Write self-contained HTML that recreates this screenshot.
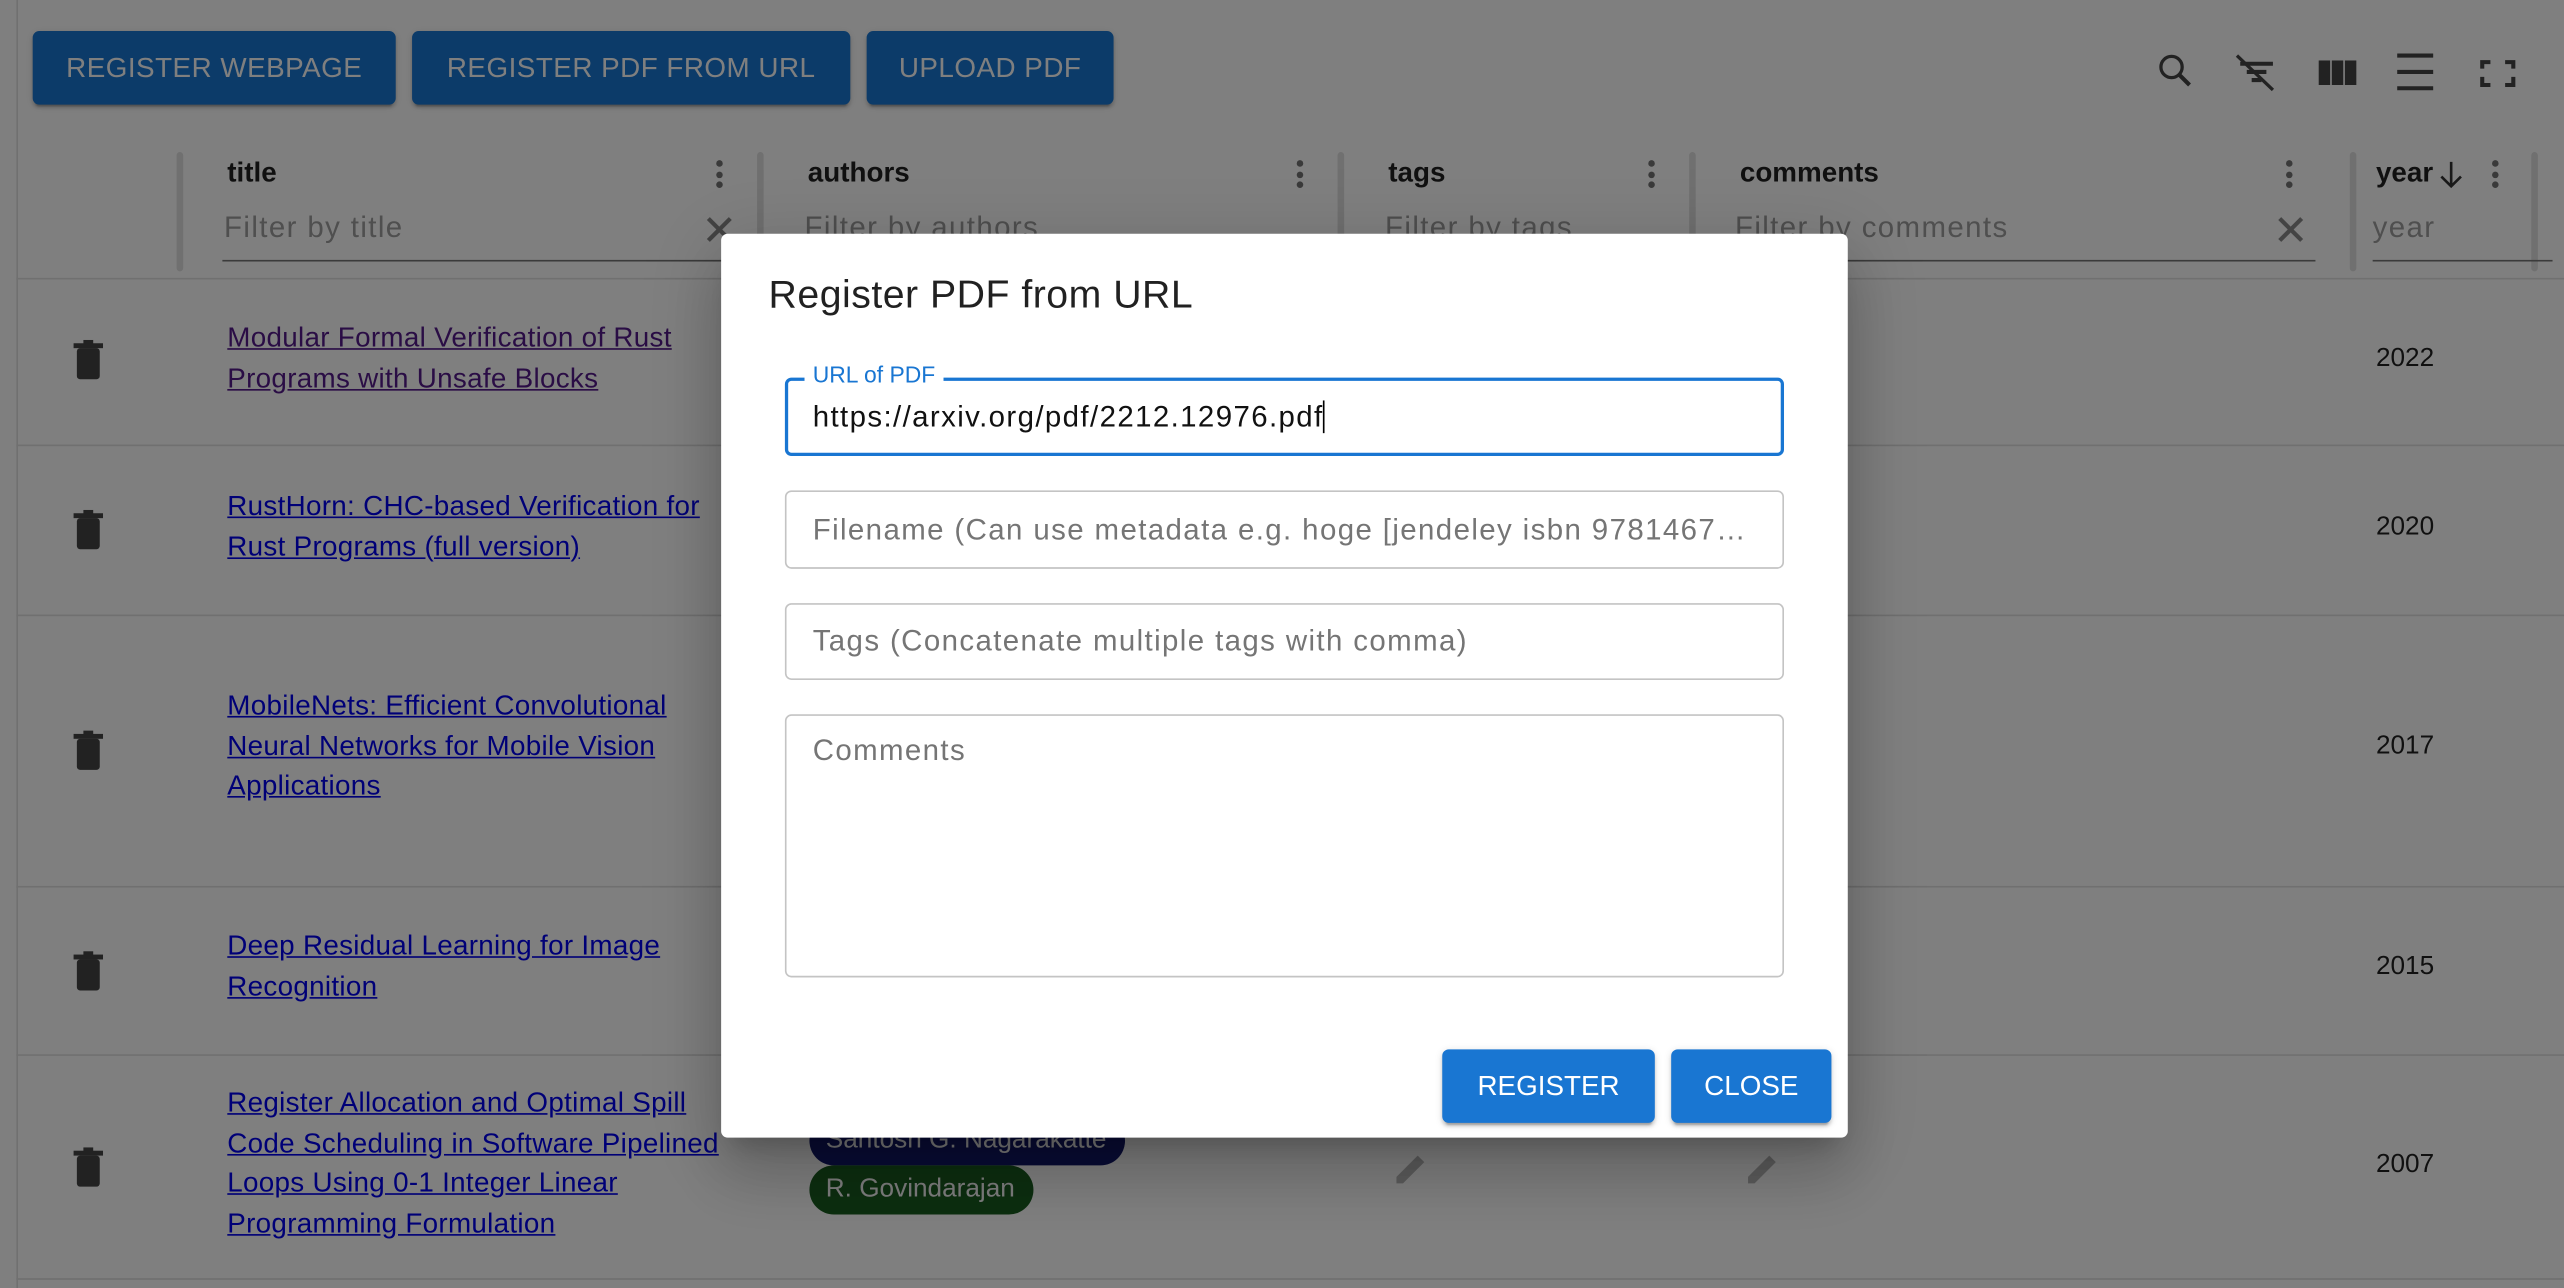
<!DOCTYPE html>
<html><head><meta charset="utf-8"><style>
html,body{margin:0;padding:0;width:2564px;height:1288px;overflow:hidden;background:#fff}
#s{position:absolute;left:0;top:0;width:1568px;height:788px;transform:scale(1.63520,1.63452);transform-origin:0 0;font-family:"Liberation Sans",sans-serif;color:rgba(0,0,0,.87)}
.a{position:absolute}
.btn{position:absolute;top:19px;height:45px;background:#1976d2;color:#fff;border-radius:4px;font-size:17px;letter-spacing:.3px;display:flex;align-items:center;justify-content:center;box-shadow:0 3px 1px -2px rgba(0,0,0,.2),0 2px 2px rgba(0,0,0,.14),0 1px 5px rgba(0,0,0,.12)}
.sep{position:absolute;top:93px;width:4px;height:73px;background:#e0e0e0;border-radius:2px}
.hd{position:absolute;top:96px;font-weight:bold;font-size:17px}
.flt{position:absolute;top:129px;font-size:18px;letter-spacing:.85px;color:#9e9e9e}
.ul{position:absolute;top:159px;height:1px;background:#777}
.row{position:absolute;left:10px;width:1558px;height:1px;background:#e0e0e0}
.lk{position:absolute;left:139px;font-size:17px;letter-spacing:.18px;line-height:24.5px;color:#0000ee;text-decoration:underline}
.yr{position:absolute;left:1453px;font-size:16px}
.dots{position:absolute;top:98px;width:4px}
.dots i{display:block;width:4px;height:4px;border-radius:2px;background:#757575;margin-bottom:2.5px}
#ov{position:absolute;left:0;top:0;width:1568px;height:788px;background:rgba(0,0,0,.5)}
#dlg{position:absolute;left:441px;top:143px;width:689px;height:553px;background:#fff;border-radius:4px;box-shadow:0 11px 15px -7px rgba(0,0,0,.2),0 24px 38px 3px rgba(0,0,0,.14),0 9px 46px 8px rgba(0,0,0,.12)}
.fld{position:absolute;left:39px;width:611px;border:1px solid #c4c4c4;border-radius:4px;font-size:18px;letter-spacing:.85px;color:#757575;box-sizing:border-box;padding-left:16px;white-space:nowrap}
.db{position:absolute;top:499px;height:45px;background:#1976d2;color:#fff;border-radius:4px;font-size:17px;display:flex;align-items:center;justify-content:center;box-shadow:0 3px 1px -2px rgba(0,0,0,.2),0 2px 2px rgba(0,0,0,.14),0 1px 5px rgba(0,0,0,.12)}
.chip{position:absolute;height:30px;border-radius:15px;color:#fff;font-size:16px;display:flex;align-items:center;padding:0 10px;box-sizing:border-box}
</style></head><body><div id="s">
<div class="a" style="left:0;top:0;width:10px;height:788px;background:#fff;border-right:1px solid #e0e0e0"></div>
<div class="btn" style="left:20px;width:222px">REGISTER WEBPAGE</div>
<div class="btn" style="left:252px;width:268px">REGISTER PDF FROM URL</div>
<div class="btn" style="left:530px;width:151px">UPLOAD PDF</div>
<svg class="a" style="left:1316px;top:30px" width="230" height="30" viewBox="0 0 230 30" fill="none" stroke="#444">
<circle cx="12" cy="11" r="6.5" stroke-width="2"/><line x1="17" y1="16" x2="23" y2="22" stroke-width="2.5"/>
<g stroke-width="2.5"><line x1="54" y1="9" x2="74" y2="9"/><line x1="58" y1="14" x2="70" y2="14"/><line x1="61" y1="19" x2="67" y2="19"/></g><line x1="52" y1="4" x2="74" y2="25" stroke-width="2"/>
<g fill="#444" stroke="none"><rect x="102" y="7" width="7" height="15"/><rect x="110" y="7" width="7" height="15"/><rect x="118" y="7" width="7" height="15"/></g>
<g stroke-width="2.5"><line x1="150" y1="4" x2="172" y2="4"/><line x1="150" y1="14" x2="172" y2="14"/><line x1="150" y1="24" x2="172" y2="24"/></g>
<path d="M202 12V8h5M216 8h5v4M202 17v5h5M216 22h5v-5" stroke-width="2.5"/>
</svg>
<div class="sep" style="left:108px"></div><div class="sep" style="left:463px"></div><div class="sep" style="left:818px"></div><div class="sep" style="left:1033px"></div><div class="sep" style="left:1437px"></div><div class="sep" style="left:1548px"></div>
<div class="hd" style="left:139px">title</div><div class="hd" style="left:494px">authors</div><div class="hd" style="left:849px">tags</div><div class="hd" style="left:1064px">comments</div><div class="hd" style="left:1453px">year</div>
<svg class="a" style="left:1491px;top:98px" width="16" height="18" fill="none" stroke="#333" stroke-width="1.6"><path d="M8 1v15M2 10l6 6 6-6"/></svg>
<div class="dots" style="left:438px"><i></i><i></i><i></i></div><div class="dots" style="left:793px"><i></i><i></i><i></i></div><div class="dots" style="left:1008px"><i></i><i></i><i></i></div><div class="dots" style="left:1398px"><i></i><i></i><i></i></div><div class="dots" style="left:1524px"><i></i><i></i><i></i></div>
<div class="flt" style="left:137px">Filter by title</div><div class="flt" style="left:492px">Filter by authors</div><div class="flt" style="left:847px">Filter by tags</div><div class="flt" style="left:1061px">Filter by comments</div><div class="flt" style="left:1451px">year</div>
<div class="a" style="left:1390px;top:128px;font-size:26px;color:#888;line-height:26px">✕</div><div class="a" style="left:429px;top:128px;font-size:26px;color:#888;line-height:26px">✕</div>
<div class="ul" style="left:136px;width:312px"></div><div class="ul" style="left:491px;width:312px"></div><div class="ul" style="left:846px;width:172px"></div><div class="ul" style="left:1061px;width:355px"></div><div class="ul" style="left:1451px;width:110px"></div>
<div class="row" style="top:170px"></div><div class="row" style="top:272px"></div><div class="row" style="top:376px"></div><div class="row" style="top:542px"></div><div class="row" style="top:645px"></div><div class="row" style="top:782px"></div>
<svg class="a" style="left:44px;top:0" width="20" height="788" fill="#444"><g id="t"><rect x="1" y="210" width="18" height="3"/><rect x="7" y="208" width="6" height="3"/><rect x="3" y="213" width="14" height="19" rx="2"/></g>
<use href="#t" y="104"/><use href="#t" y="239"/><use href="#t" y="374"/><use href="#t" y="494"/></svg>
<div class="lk" style="top:195px;color:#551a8b">Modular Formal Verification of Rust<br>Programs with Unsafe Blocks</div>
<div class="lk" style="top:298px">RustHorn: CHC-based Verification for<br>Rust Programs (full version)</div>
<div class="lk" style="top:420px">MobileNets: Efficient Convolutional<br>Neural Networks for Mobile Vision<br>Applications</div>
<div class="lk" style="top:567px">Deep Residual Learning for Image<br>Recognition</div>
<div class="lk" style="top:663px">Register Allocation and Optimal Spill<br>Code Scheduling in Software Pipelined<br>Loops Using 0-1 Integer Linear<br>Programming Formulation</div>
<div class="yr" style="top:211px">2022</div><div class="yr" style="top:314px">2020</div><div class="yr" style="top:448px">2017</div><div class="yr" style="top:583px">2015</div><div class="yr" style="top:704px">2007</div>
<div class="chip" style="left:495px;top:683px;width:193px;background:#121a6e">Santosh G. Nagarakatte</div>
<div class="chip" style="left:495px;top:713px;width:137px;background:#1a5e20">R. Govindarajan</div>
<svg class="a" style="left:852px;top:702px" width="240" height="24" fill="#bbb"><path d="M2 22v-4L15 5l4 4L6 22z"/><path d="M217 22v-4L230 5l4 4L221 22z"/></svg>
<div id="ov"></div>
<div id="dlg">
<div class="a" style="left:29px;top:24px;font-size:24px;letter-spacing:.3px;color:rgba(0,0,0,.87)">Register PDF from URL</div>
<div class="fld" style="top:88px;height:48px;border:2px solid #1976d2;color:#111;padding-left:15px;line-height:44px">https://arxiv.org/pdf/2212.12976.pdf<span style="border-left:1.5px solid #000;margin-left:0"></span></div>
<div class="a" style="left:51px;top:78px;background:#fff;padding:0 5px;font-size:14px;color:#1976d2">URL of PDF</div>
<div class="fld" style="top:157px;height:48px;line-height:46px">Filename (Can use metadata e.g. hoge [jendeley isbn 9781467…</div>
<div class="fld" style="top:226px;height:47px;line-height:45px">Tags (Concatenate multiple tags with comma)</div>
<div class="fld" style="top:294px;height:161px;padding-top:11px">Comments</div>
<div class="db" style="left:441px;width:130px">REGISTER</div>
<div class="db" style="left:581px;width:98px">CLOSE</div>
</div>
</div></body></html>
